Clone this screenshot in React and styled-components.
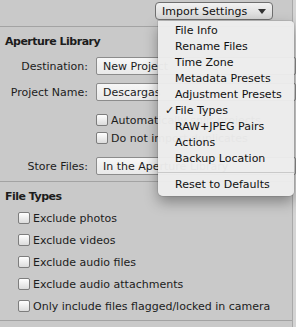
import React from "react";
import styled, { createGlobalStyle } from "styled-components";

const Global = createGlobalStyle`
  html, body {
    margin: 0;
    padding: 0;
    background: #d2d2d2;
  }
  body {
    font-family: "DejaVu Sans", "Liberation Sans", sans-serif;
    font-size: 11px;
    color: #1c1c1c;
  }
`;

const Frame = styled.div`
  position: relative;
  width: 296px;
  height: 327px;
  overflow: hidden;
  background: #d4d4d4;
`;

const Panel = styled.div`
  width: 292px;
  height: 327px;
  background: #c9c9c9;
  border-right: 1px solid #a9a9a9;
  display: flex;
  flex-direction: column;
`;

const TopBar = styled.div`
  height: 27px;
  border-bottom: 1px solid #a3a3a3;
  display: flex;
  justify-content: flex-end;
  align-items: flex-start;
  padding: 2px 19px 0 0;
  box-sizing: border-box;
`;

const PopButton = styled.div`
  width: 118px;
  height: 18px;
  box-sizing: border-box;
  border: 1px solid #6f6f6f;
  border-radius: 4px;
  background: linear-gradient(#f2f2f2, #d6d6d6);
  display: flex;
  align-items: center;
  justify-content: space-between;
  padding: 0 6px 0 6px;
  font-size: 11px;
  color: #111;
`;

const Triangle = styled.span`
  width: 0;
  height: 0;
  border-left: 4px solid transparent;
  border-right: 4px solid transparent;
  border-top: 5px solid #333;
`;

const Section = styled.div`
  padding: 8px 0 0 5px;
  border-bottom: 1px solid #a3a3a3;
  height: ${(p) => p.$h}px;
  box-sizing: border-box;
`;

const Heading = styled.div`
  font-weight: bold;
  font-size: 11px;
  letter-spacing: -0.5px;
  height: 14px;
  line-height: 14px;
`;

const FormGrid = styled.div`
  display: grid;
  grid-template-columns: 83px 1fr;
  column-gap: 8px;
  row-gap: 8px;
  margin-top: 8px;
  align-items: center;
`;

const Label = styled.div`
  text-align: right;
`;

const Field = styled.div`
  height: 18px;
  width: 200px;
  box-sizing: border-box;
  border: 1px solid #8c8c8c;
  border-radius: 2px;
  background: linear-gradient(#f7f7f7, #e9e9e9);
  display: flex;
  align-items: center;
  padding-left: 6px;
  white-space: nowrap;
  overflow: hidden;
`;

const Checks = styled.div`
  display: flex;
  flex-direction: column;
  gap: ${(p) => p.$gap}px;
  padding: ${(p) => p.$pad};
`;

const CheckRow = styled.label`
  display: flex;
  align-items: center;
  gap: 3px;
  white-space: nowrap;
  height: 12px;
`;

const Box = styled.span`
  width: 12px;
  height: 12px;
  box-sizing: border-box;
  border: 1px solid #7d7d7d;
  border-radius: 2px;
  background: linear-gradient(#ffffff, #dcdcdc);
  flex: none;
`;

const Menu = styled.div`
  position: absolute;
  top: 21px;
  left: 158px;
  width: 136px;
  padding: 2px 0 3px;
  background: rgba(236, 236, 236, 0.97);
  border-radius: 0 4px 5px 5px;
  box-shadow: 0 6px 14px rgba(0, 0, 0, 0.35), 0 0 0 1px rgba(0, 0, 0, 0.08);
`;

const Item = styled.div`
  position: relative;
  height: 16px;
  line-height: 16px;
  padding-left: 17px;
  font-size: 11px;
  color: #111;
  white-space: nowrap;
`;

const Check = styled.span`
  position: absolute;
  left: 7px;
  top: 0;
`;

const Separator = styled.div`
  height: 1px;
  background: #c9c9c9;
  margin: 5px 0 4px;
`;

const menuItems = [
  "File Info",
  "Rename Files",
  "Time Zone",
  "Metadata Presets",
  "Adjustment Presets",
  "File Types",
  "RAW+JPEG Pairs",
  "Actions",
  "Backup Location",
];

const fileTypes = [
  "Exclude photos",
  "Exclude videos",
  "Exclude audio files",
  "Exclude audio attachments",
  "Only include files flagged/locked in camera",
];

export default function App() {
  return (
    <Frame>
      <Global />
      <Panel>
        <TopBar>
          <PopButton>
            <span>Import Settings</span>
            <Triangle />
          </PopButton>
        </TopBar>
        <Section $h={155}>
          <Heading>Aperture Library</Heading>
          <FormGrid>
            <Label>Destination:</Label>
            <Field>New Project</Field>
            <Label>Project Name:</Label>
            <Field>Descargas</Field>
            <span />
            <Checks $gap={6} $pad="5px 0 5px">
              <CheckRow>
                <Box />
                Automatically split projects
              </CheckRow>
              <CheckRow>
                <Box />
                Do not import duplicates
              </CheckRow>
            </Checks>
            <Label>Store Files:</Label>
            <Field>In the Aperture Library</Field>
          </FormGrid>
        </Section>
        <Section $h={139}>
          <Heading>File Types</Heading>
          <Checks $gap={10} $pad="8px 0 0 13px">
            {fileTypes.map((t) => (
              <CheckRow key={t}>
                <Box />
                {t}
              </CheckRow>
            ))}
          </Checks>
        </Section>
      </Panel>
      <Menu>
        {menuItems.map((m) => (
          <Item key={m}>
            {m === "File Types" && <Check>✓</Check>}
            {m}
          </Item>
        ))}
        <Separator />
        <Item>Reset to Defaults</Item>
      </Menu>
    </Frame>
  );
}
